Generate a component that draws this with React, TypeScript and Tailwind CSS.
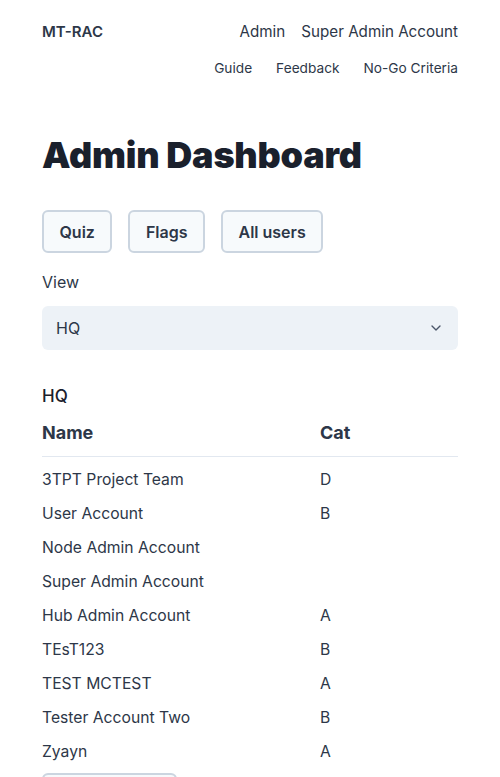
import React from 'react';

const rows: { name: string; cat: string }[] = [
  { name: '3TPT Project Team', cat: 'D' },
  { name: 'User Account', cat: 'B' },
  { name: 'Node Admin Account', cat: '' },
  { name: 'Super Admin Account', cat: '' },
  { name: 'Hub Admin Account', cat: 'A' },
  { name: 'TEsT123', cat: 'B' },
  { name: 'TEST MCTEST', cat: 'A' },
  { name: 'Tester Account Two', cat: 'B' },
  { name: 'Zyayn', cat: 'A' },
];

const App: React.FC = () => {
  return (
    <div className="h-[777px] overflow-hidden bg-white px-[42px] text-[#2d3748]" style={{ fontFamily: 'Inter, "Noto Sans", sans-serif' }}>
      {/* Header */}
      <header className="pt-[20px]">
        <div className="flex h-6 items-center justify-between">
          <span className="text-[15px] font-semibold leading-6 text-[#2d3748]">MT-RAC</span>
          <nav className="flex gap-4 text-[15.2px] leading-6">
            <a>Admin</a>
            <a>Super Admin Account</a>
          </nav>
        </div>
        <nav className="mt-[12px] flex justify-end gap-6 text-[13.7px] leading-6">
          <a>Guide</a>
          <a>Feedback</a>
          <a>No-Go Criteria</a>
        </nav>
      </header>

      <h1 className="mt-[53px] text-[36px] font-black leading-[44px] tracking-[-0.2px] text-[#1a202c]">
        Admin Dashboard
      </h1>

      <div className="mt-[33px] flex gap-4">
        {['Quiz', 'Flags', 'All users'].map((label) => (
          <button
            key={label}
            className="h-[43px] rounded-md border-2 border-[#cbd5e0] bg-[#f7fafc] px-[15.5px] text-[16px] font-semibold text-[#2d3748]"
          >
            {label}
          </button>
        ))}
      </div>

      <label className="mt-[17px] block text-[16px] leading-[24px]">View</label>
      <div className="mt-[12px] flex h-[44px] items-center justify-between rounded-md bg-[#edf2f7] pl-[14px] pr-[14px]">
        <span className="text-[16px]">HQ</span>
        <svg width="16" height="16" viewBox="0 0 24 24" fill="none" stroke="#4a5568" strokeWidth="2" strokeLinecap="round" strokeLinejoin="round">
          <path d="M6 9l6 6 6-6" />
        </svg>
      </div>

      <h2 className="mt-[34px] text-[17px] font-medium leading-[24px] text-[#1a202c]">HQ</h2>

      <table className="mt-[13px] w-full text-left">
        <thead>
          <tr className="border-b border-[#e2e8f0]">
            <th className="w-[278px] pb-[11px] text-[18px] font-bold leading-[24px]">Name</th>
            <th className="pb-[11px] text-[18px] font-bold leading-[24px]">Cat</th>
          </tr>
        </thead>
        <tbody className="text-[15.7px]">
          {rows.map((r, i) => (
            <tr key={r.name}>
              <td className={`${i === 0 ? 'pt-[11px]' : 'pt-[10px]'} h-[34px] pb-0 leading-[24px]`}>{r.name}</td>
              <td className={`${i === 0 ? 'pt-[11px]' : 'pt-[10px]'} pb-0 leading-[24px]`}>{r.cat}</td>
            </tr>
          ))}
        </tbody>
      </table>

      <div className="mt-[9px] h-[43px] w-[135px] rounded-md border-2 border-[#cbd5e0] bg-[#f7fafc]" />
    </div>
  );
};

export default App;
